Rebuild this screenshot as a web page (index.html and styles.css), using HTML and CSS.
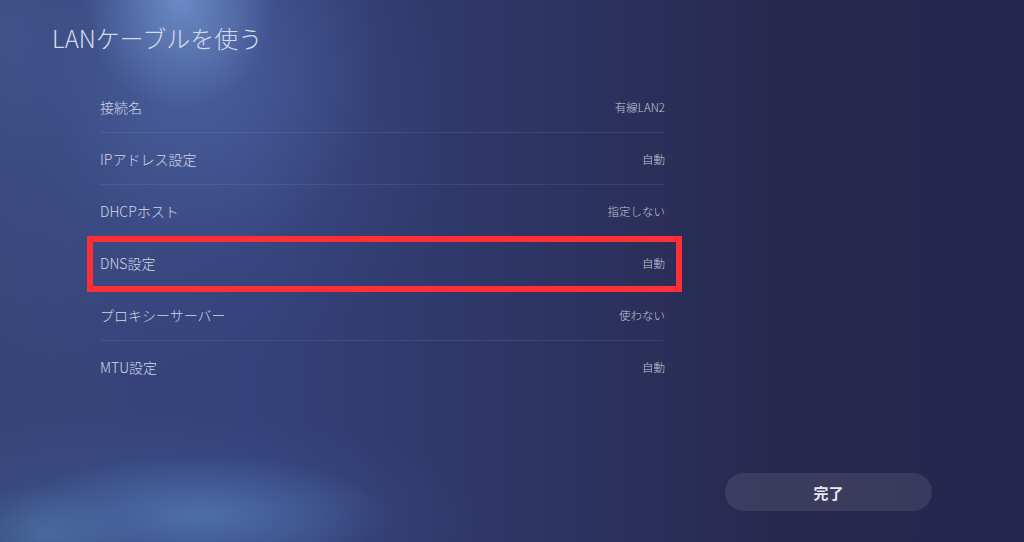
FILE: index.html
```html
<!DOCTYPE html>
<html lang="ja">
  <head>
    <meta charset="UTF-8" />
    <meta name="viewport" content="width=device-width, initial-scale=1.0" />
    <title>LANケーブルを使う</title>
    <link rel="stylesheet" href="styles.css">
  </head>
  <body>
    <div class="screen">
      <h1 class="title">LANケーブルを使う</h1>

      <!-- Settings -->
      <ul class="settings">
        <li class="row">
          <span class="label">接続名</span>
          <span class="value">有線LAN2</span>
        </li>
        <li class="row">
          <span class="label">IPアドレス設定</span>
          <span class="value">自動</span>
        </li>
        <li class="row">
          <span class="label">DHCPホスト</span>
          <span class="value">指定しない</span>
        </li>
        <li class="row row-marked">
          <span class="label">DNS設定</span>
          <span class="value">自動</span>
        </li>
        <li class="row">
          <span class="label">プロキシーサーバー</span>
          <span class="value">使わない</span>
        </li>
        <li class="row">
          <span class="label">MTU設定</span>
          <span class="value">自動</span>
        </li>
      </ul>

      <div class="footer">
        <button class="btn-done">完了</button>
      </div>
    </div>
  </body>
</html>
```

FILE: styles.css
```css
html,
body {
  margin: 0;
  height: 100%;
}
body {
  font-family: "Noto Sans CJK JP", "Noto Sans", sans-serif;
  color: #d4d8e8;
  overflow: hidden;
  background-color: #282a54;
  background-image:
    radial-gradient(ellipse 95px 110px at 180px 0px, rgba(125, 160, 220, 0.7) 0%, rgba(125, 160, 220, 0) 100%),
    radial-gradient(ellipse 170px 200px at 210px 60px, rgba(95, 128, 192, 0.35) 0%, rgba(95, 128, 192, 0) 100%),
    radial-gradient(ellipse 300px 260px at 160px 120px, rgba(80, 105, 170, 0.3) 0%, rgba(80, 105, 170, 0) 100%),
    radial-gradient(ellipse 90px 140px at 10px 30px, rgba(80, 100, 160, 0.3) 0%, rgba(80, 100, 160, 0) 100%),
    radial-gradient(ellipse 190px 60px at 200px 515px, rgba(88, 128, 185, 0.65) 0%, rgba(88, 128, 185, 0) 100%),
    radial-gradient(ellipse 300px 110px at 180px 520px, rgba(75, 105, 170, 0.3) 0%, rgba(75, 105, 170, 0) 100%),
    radial-gradient(ellipse 90px 50px at 45px 535px, rgba(85, 130, 175, 0.55) 0%, rgba(85, 130, 175, 0) 100%),
    linear-gradient(to right, #37467a 0%, #34417a 25%, #2e3666 50%, #28294f 75%, #25264d 100%);
}
.screen {
  display: flex;
  flex-direction: column;
  height: 100%;
}
.title {
  margin: 0;
  padding: 24px 0 0 52px;
  font-size: 24px;
  line-height: 28px;
  font-weight: 300;
  color: #d6dbec;
}
.settings {
  list-style: none;
  margin: 29px 0 0 100px;
  padding: 0;
  width: 565px;
}
.row {
  position: relative;
  display: flex;
  justify-content: space-between;
  align-items: center;
  height: 52px;
  box-sizing: border-box;
  border-bottom: 1px solid rgba(255, 255, 255, 0.08);
}
.row:last-child {
  border-bottom: none;
}
.label {
  font-size: 14px;
  font-weight: 300;
  color: #d2d6e6;
}
.value {
  font-size: 11.5px;
  font-weight: 300;
  color: #c0c4d6;
}
.row-marked::after {
  content: "";
  position: absolute;
  top: -1px;
  bottom: -4px;
  left: -13px;
  right: -17px;
  border: 6px solid #fe2f36;
}
.footer {
  margin-top: auto;
  display: flex;
  justify-content: flex-end;
  padding: 0 92px 31px 0;
}
.btn-done {
  width: 207px;
  height: 38px;
  border: none;
  border-radius: 19px;
  background-color: rgba(255, 255, 255, 0.09);
  color: #e6e8f2;
  font-family: inherit;
  font-size: 15px;
  font-weight: 700;
  cursor: pointer;
}
```
